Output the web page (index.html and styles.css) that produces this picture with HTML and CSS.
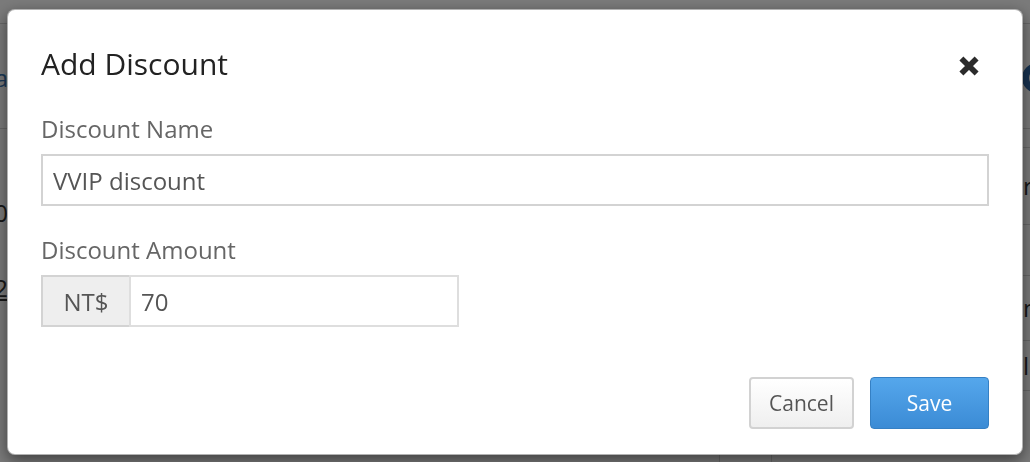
FILE: index.html
```html
<!DOCTYPE html>
<html lang="en">
<head>
<meta charset="utf-8">
<title>Add Discount</title>
<link rel="stylesheet" href="styles.css">
</head>
<body>
<div class="page">
  <div class="topbar"></div>
  <div class="titlebar">
    <div class="edge-left"><span class="link">Data</span></div>
    <div class="edge-right"><span class="circle-icon"></span></div>
  </div>
  <div class="content">
    <div class="left-col">
      <div class="edge-left cell-a">10</div>
      <div class="edge-left cell-b"><span class="underlined">12</span></div>
    </div>
    <div class="right-col">
      <div class="trow r1"><span class="cell"></span><span class="cell"></span><span class="cell edge"></span></div>
      <div class="trow r2"><span class="cell"></span><span class="cell"></span><span class="cell edge">r</span></div>
      <div class="trow r3"><span class="cell"></span><span class="cell"></span><span class="cell edge"></span></div>
      <div class="trow r4"><span class="cell"></span><span class="cell"></span><span class="cell edge">n</span></div>
      <div class="trow r5"><span class="cell"></span><span class="cell"></span><span class="cell edge">l</span></div>
      <div class="trow r6"><span class="cell"></span><span class="cell"></span><span class="cell edge"></span></div>
    </div>
  </div>
</div>

<div class="backdrop"></div>

<div class="modal" role="dialog" aria-labelledby="modal-title">
  <div class="modal-header">
    <h4 class="modal-title" id="modal-title">Add Discount</h4>
    <button class="close" type="button" aria-label="Close">
      <svg width="20" height="20" viewBox="0 0 20 20" aria-hidden="true">
        <path d="M2.4 2.4 L17.6 17.6 M17.6 2.4 L2.4 17.6" stroke="#2b2b2b" stroke-width="5.6" stroke-linecap="butt" fill="none"/>
      </svg>
    </button>
  </div>
  <div class="modal-body">
    <div class="form-group">
      <label class="form-label">Discount Name</label>
      <div class="form-control">VVIP discount</div>
    </div>
    <div class="form-group">
      <label class="form-label">Discount Amount</label>
      <div class="input-group">
        <span class="addon">NT$</span>
        <div class="form-control grow">70</div>
      </div>
    </div>
  </div>
  <div class="modal-footer">
    <button class="btn btn-default" type="button">Cancel</button>
    <button class="btn btn-primary" type="button">Save</button>
  </div>
</div>
</body>
</html>
```

FILE: styles.css
```css
html, body {
  margin: 0;
  padding: 0;
}

body {
  background: #fff;
  font-family: "Open Sans", "Noto Sans", sans-serif;
  color: #333;
  overflow: hidden;
  height: 462px;
}

/* ---------- page behind the dialog ---------- */
.page {
  width: 1030px;
  height: 462px;
  font-size: 24px;
}

.topbar {
  height: 23px;
  border-bottom: 1px solid #d8d8d8;
}

.titlebar {
  height: 104px;
  border-bottom: 1px solid #d8d8d8;
  display: flex;
  justify-content: space-between;
  align-items: center;
}

.edge-left {
  width: 8px;
  overflow: hidden;
  display: flex;
  justify-content: flex-end;
  white-space: nowrap;
}

.edge-right {
  width: 7px;
  overflow: hidden;
  display: flex;
  justify-content: flex-start;
}

.link {
  color: #3a78b5;
  font-size: 24px;
  line-height: 30px;
  margin-top: 4px;
}

.circle-icon {
  display: block;
  flex: none;
  box-sizing: border-box;
  width: 30px;
  height: 30px;
  border-radius: 50%;
  border: 7px solid #2f69a8;
  background: #fff;
  margin-left: -1px;
  margin-top: 4px;
}

.content {
  display: grid;
  grid-template-columns: 719px 311px;
  height: 334px;
}

.left-col {
  display: flex;
  flex-direction: column;
}

.cell-a {
  margin-top: 69px;
  line-height: 30px;
  color: #333;
}

.cell-b {
  margin-top: 45px;
  line-height: 30px;
  color: #333;
}

.underlined {
  text-decoration: underline;
}

.right-col {
  display: flex;
  flex-direction: column;
}

.trow {
  display: grid;
  grid-template-columns: 52px 252px 7px;
  border-bottom: 1px solid #d8d8d8;
  box-sizing: border-box;
}

.cell {
  border-left: 1px solid #d8d8d8;
  line-height: 30px;
  white-space: nowrap;
  overflow: hidden;
}

.edge {
  border-left: 0;
  display: flex;
  align-items: center;
}

.r1 { height: 19px; }
.r2 { height: 77px; }
.r3 { height: 51px; }
.r4 { height: 65px; }
.r5 { height: 50px; }
.r6 { height: 72px; border-bottom: 0; }

/* ---------- backdrop ---------- */
.backdrop {
  position: fixed;
  inset: 0;
  background: rgba(0, 0, 0, 0.52);
}

/* ---------- dialog ---------- */
.modal {
  position: fixed;
  left: 7px;
  top: 9px;
  width: 1016px;
  box-sizing: border-box;
  background: #fff;
  border: 1px solid rgba(0, 0, 0, 0.3);
  border-radius: 8px;
  box-shadow: 0 5px 15px rgba(0, 0, 0, 0.5);
  font-family: "Open Sans", "Noto Sans", sans-serif;
}

.modal-header {
  display: flex;
  justify-content: space-between;
  align-items: flex-start;
  padding: 37px 43px 16px 33px;
}

.modal-title {
  margin: 0;
  font-size: 30px;
  line-height: 34px;
  font-weight: 400;
  color: #222;
}

.close {
  margin-top: 9px;
  padding: 0;
  border: 0;
  background: none;
  width: 20px;
  height: 20px;
  display: block;
  cursor: pointer;
}

.close svg {
  display: block;
}

.modal-body {
  padding: 16px 33px 25px;
}

.form-group {
  margin-bottom: 28px;
}

.form-group:last-child {
  margin-bottom: 0;
}

.form-label {
  display: block;
  font-size: 24px;
  line-height: 32px;
  color: #666;
  margin-bottom: 9px;
}

.form-control {
  box-sizing: border-box;
  height: 52px;
  border: 2px solid #d3d3d3;
  padding: 0 10px;
  font-size: 24px;
  color: #555;
  display: flex;
  align-items: center;
  background: #fff;
}

.input-group {
  display: flex;
  width: 418px;
}

.addon {
  box-sizing: border-box;
  width: 88px;
  height: 52px;
  background: #eee;
  border: 2px solid #d3d3d3;
  border-right: 0;
  display: flex;
  align-items: center;
  justify-content: center;
  font-size: 24px;
  color: #555;
}

.grow {
  flex: 1;
  border-color: #dedede;
}

.modal-footer {
  display: flex;
  justify-content: flex-end;
  gap: 16px;
  padding: 25px 33px 25px;
}

.btn {
  box-sizing: border-box;
  height: 52px;
  border-radius: 4px;
  font-family: "Open Sans", "Noto Sans", sans-serif;
  font-size: 21px;
  padding: 0;
  cursor: pointer;
}

.btn-default {
  width: 105px;
  color: #555;
  background: linear-gradient(#ffffff, #efefef);
  border: 2px solid #d2d2d2;
}

.btn-primary {
  width: 119px;
  color: #fff;
  background: linear-gradient(#55a7ec, #3b8bd5);
  border: 1px solid #3580c4;
}
```
